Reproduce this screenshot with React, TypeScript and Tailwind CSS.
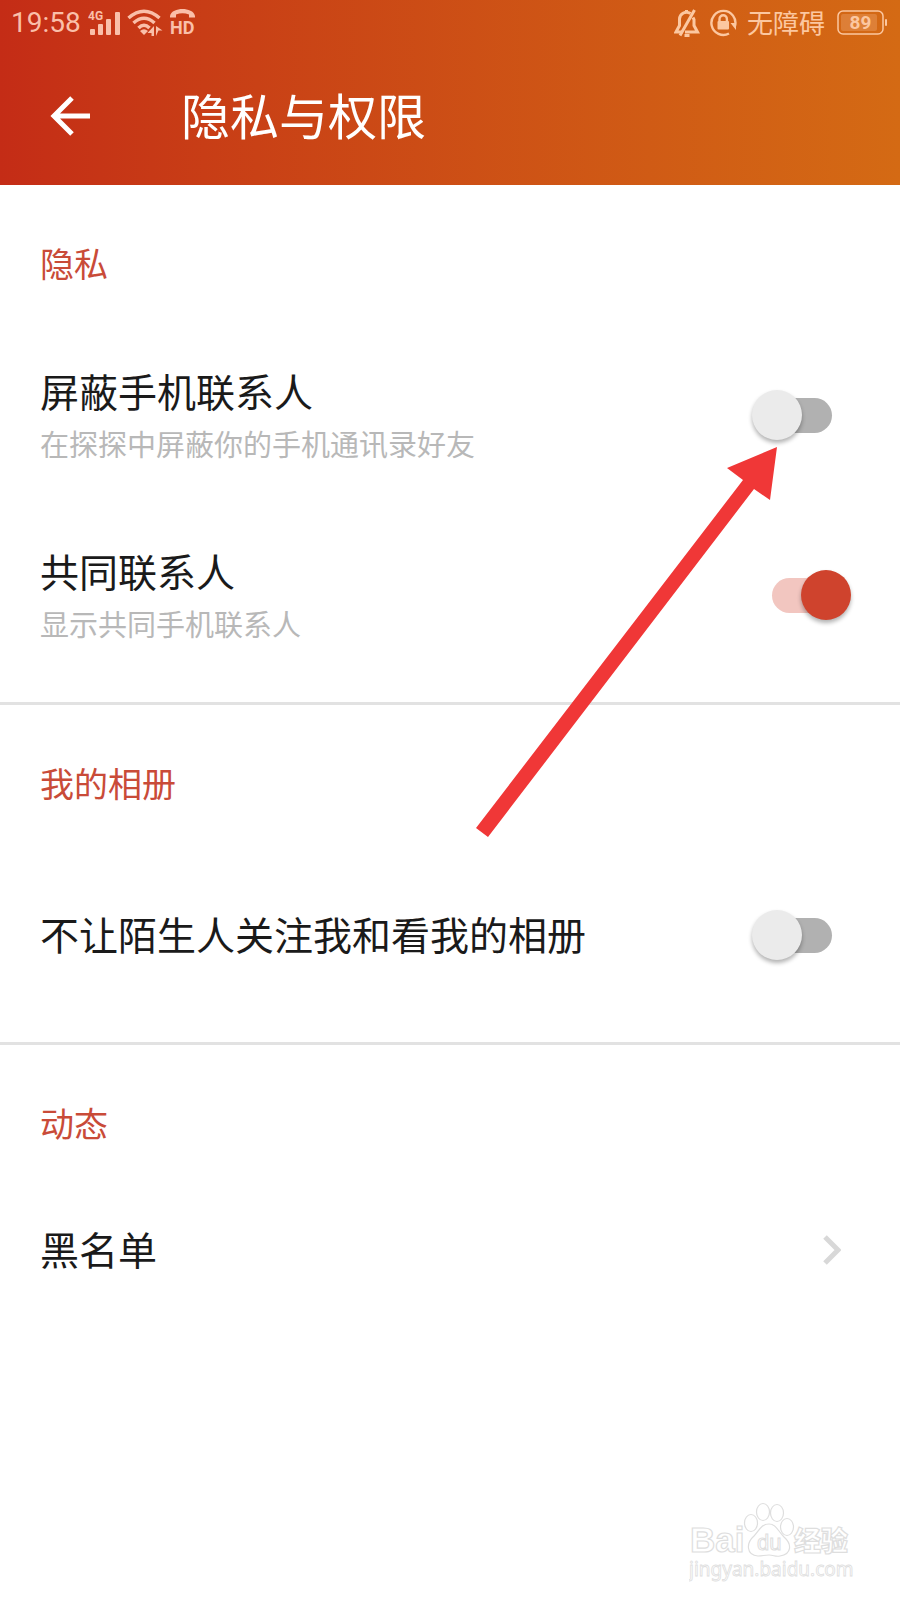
import { useId, useState } from 'react'
import type { ReactNode } from 'react'

function SignalIcon() {
  return (
    <svg width="32" height="26" viewBox="0 0 32 26" fill="currentColor" aria-hidden="true">
      <text x="0" y="10" className="font-['Roboto',sans-serif] text-[12px] font-bold">
        4G
      </text>
      <rect x="2" y="19" width="5" height="6" rx="1" />
      <rect x="10" y="14" width="5" height="11" rx="1" />
      <rect x="18" y="9" width="5" height="16" rx="1" />
      <rect x="27" y="2" width="5" height="23" rx="1" />
    </svg>
  )
}

function WifiIcon() {
  return (
    <svg width="36" height="28" viewBox="0 0 36 28" fill="none" aria-hidden="true">
      <g stroke="currentColor" strokeWidth="3.500">
        <path d="M1.500 9 Q17 -4.500 32.500 9" />
        <path d="M6.500 14 Q17 4.500 27.500 14" />
        <path d="M11.500 19 Q17 13.500 22.500 19" />
      </g>
      <path d="M13 22 Q17 18.500 21 22 L17 26Z" fill="currentColor" />
      <path d="M27 17v10h-2.500v-3h-4zM29 27V17l6.500 4.500h-4z" fill="currentColor" />
    </svg>
  )
}

function HdIcon() {
  return (
    <svg width="28" height="32" viewBox="0 0 28 32" fill="currentColor" aria-hidden="true">
      <path d="M0 9C1 4 7 2 12.500 2S24 4 25 9v1.500h-6V7.500Q12.500 5 6 7.500v3H0z" />
      <text x="0" y="27" className="font-['Roboto',sans-serif] text-[18px] font-bold">
        HD
      </text>
    </svg>
  )
}

function MutedBellIcon() {
  return (
    <svg width="26" height="28" viewBox="0 0 26 28" fill="none" stroke="currentColor" strokeWidth="3" aria-hidden="true">
      <path d="M16.500 4.500A7 7 0 0 0 5.500 10v6.500L2 23h6.500M19 8.500l1 2v6l3.500 6.500H11" />
      <path d="M20.500 1 6 26.500M12.500 1v3M10.500 26.500h5" />
    </svg>
  )
}

function RotationLockIcon() {
  return (
    <svg width="27" height="28" viewBox="0 0 27 28" fill="none" stroke="currentColor" strokeWidth="2.400" aria-hidden="true">
      <path d="M19 24.500A12 12 0 1 1 25 17" />
      <path d="M20.500 14H26v7z" fill="currentColor" stroke="none" />
      <rect x="7.500" y="12" width="11.500" height="8.500" rx="1" fill="currentColor" stroke="none" />
      <path d="M9.500 12.500V10a3.700 3.700 0 0 1 7.400 0v2.500" />
    </svg>
  )
}

function BatteryIcon() {
  return (
    <svg width="51" height="26" viewBox="0 0 51 26" aria-hidden="true">
      <rect x="1" y="1" width="45" height="23" rx="5" fill="none" stroke="currentColor" strokeWidth="1.500" />
      <rect x="4" y="4" width="36" height="17" rx="2" fill="currentColor" opacity="0.25" />
      <rect x="48" y="9" width="2" height="7" rx="1" fill="currentColor" />
      <text x="23.500" y="19" textAnchor="middle" fill="currentColor" className="font-['Roboto',sans-serif] text-[19px] font-bold">
        89
      </text>
    </svg>
  )
}

function StatusBar() {
  return (
    <div className="flex h-[46px] items-center justify-between pr-3 pl-[11px] text-[#fabfa9]">
      <div className="flex items-center gap-[7px]">
        <span className="font-['Roboto',sans-serif] text-[28px] leading-none">19:58</span>
        <SignalIcon />
        <WifiIcon />
        <HdIcon />
      </div>
      <div className="flex items-center gap-[10px] text-[#fcc7a0]">
        <MutedBellIcon />
        <RotationLockIcon />
        <span className="pr-[2px] pb-[2px] text-[26px] leading-none">无障碍</span>
        <BatteryIcon />
      </div>
    </div>
  )
}

function Section({ title, last, children }: { title: string; last?: boolean; children: ReactNode }) {
  return (
    <section className={last ? 'pt-[54px]' : 'border-b-[3px] border-[#e2e2e2] pt-[54px] pb-[17px]'}>
      <h2 className="mb-[38px] px-10 text-[34px] leading-[48px] text-[#c94b38]">{title}</h2>
      {children}
    </section>
  )
}

function SwitchRow({ title, desc, defaultOn = false }: { title: string; desc?: string; defaultOn?: boolean }) {
  const id = useId()
  const [on, setOn] = useState(defaultOn)

  return (
    <div className="flex h-[180px] items-center justify-between pr-[68px] pl-10">
      <label htmlFor={id} className="flex flex-col pb-1">
        <span className="text-[39px] leading-[60px] text-[#1a1a1a]">{title}</span>
        {desc && <span className="text-[29px] leading-[46px] text-[#b8b8b8]">{desc}</span>}
      </label>
      <input
        id={id}
        type="checkbox"
        role="switch"
        checked={on}
        onChange={(e) => setOn(e.target.checked)}
        className="relative h-[35px] w-[60px] shrink-0 cursor-pointer appearance-none rounded-full bg-[#b1b1b1] before:absolute before:-top-2 before:-left-5 before:size-[50px] before:rounded-full before:bg-[#ebebeb] before:shadow-[0_3px_4px_rgba(0,0,0,0.3)] checked:bg-[#f2c6c0] checked:before:left-[29px] checked:before:bg-[#cf432d]"
      />
    </div>
  )
}

function Watermark() {
  return (
    <svg width="168" height="88" viewBox="0 0 168 88" fill="#fff" stroke="#dedede" strokeWidth="1.200" aria-hidden="true">
      <text x="1" y="54" className="font-['Liberation_Sans',sans-serif] text-[35px] font-bold">
        Bai
      </text>
      <ellipse cx="62" cy="25" rx="6.500" ry="8.500" />
      <ellipse cx="74" cy="14" rx="6.500" ry="8.500" />
      <ellipse cx="88" cy="15" rx="6.500" ry="8.500" />
      <ellipse cx="98" cy="29" rx="6.500" ry="8.500" />
      <path d="M80 26c-8 0-10 7-15 12-8 7-8 19 4 20 5 0 6-1 11-1s6 2 11 1c12-2 12-12 4-19-6-6-8-13-15-13z" />
      <text x="68" y="52" strokeWidth="1" className="font-['Liberation_Sans',sans-serif] text-[22px]">
        du
      </text>
      <text x="105" y="53" className="font-['Noto_Sans_CJK_SC',sans-serif] text-[27px] font-black">
        经验
      </text>
      <text x="0" y="78" strokeWidth="0.800" className="font-['Noto_Sans',sans-serif] text-[19px]">
        jingyan.baidu.com
      </text>
    </svg>
  )
}

export default function App() {
  return (
    <div className="relative flex min-h-screen flex-col bg-white font-['Noto_Sans_CJK_SC',sans-serif]">
      <header className="bg-linear-to-r from-[#c42c16] to-[#d46a14]">
        <StatusBar />
        <div className="flex h-[139px] items-center gap-[91px] pl-[50px] text-white">
          <button type="button" aria-label="返回" className="cursor-pointer">
            <svg width="40" height="40" viewBox="0 0 40 40" fill="none" stroke="currentColor" strokeWidth="5" aria-hidden="true">
              <path d="M40 20H4M22 2 4 20l18 18" />
            </svg>
          </button>
          <h1 className="pb-1 text-[49px] leading-[72px]">隐私与权限</h1>
        </div>
      </header>

      <main>
        <Section title="隐私">
          <SwitchRow title="屏蔽手机联系人" desc="在探探中屏蔽你的手机通讯录好友" />
          <SwitchRow title="共同联系人" desc="显示共同手机联系人" defaultOn />
        </Section>
        <Section title="我的相册">
          <SwitchRow title="不让陌生人关注我和看我的相册" />
        </Section>
        <Section title="动态" last>
          <button type="button" className="flex h-[130px] w-full cursor-pointer items-center justify-between pr-[59px] pl-10">
            <span className="pb-1 text-[39px] leading-[60px] text-[#1a1a1a]">黑名单</span>
            <svg width="18" height="30" viewBox="0 0 18 30" fill="none" stroke="#d8d8d8" strokeWidth="5" aria-hidden="true">
              <path d="M2 2l13 13L2 28" />
            </svg>
          </button>
        </Section>
      </main>

      <footer className="mt-auto flex justify-end pr-[43px] pb-[14px]">
        <Watermark />
      </footer>

      {/* 指向第一个开关的标注箭头 */}
      <svg
        className="pointer-events-none absolute top-[447px] right-[123px]"
        width="301"
        height="390"
        viewBox="0 0 301 390"
        fill="#f03737"
        aria-hidden="true"
      >
        <path d="M301 0 294 53 278 42 12 390 0 381 267 33 251 21Z" />
      </svg>
    </div>
  )
}
